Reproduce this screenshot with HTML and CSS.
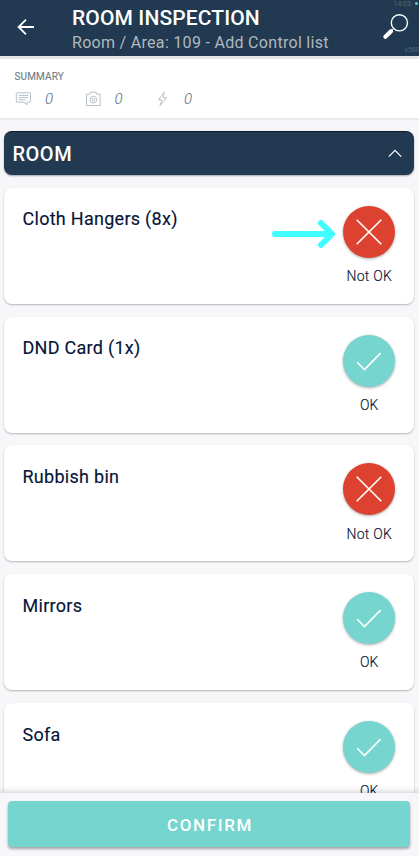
FILE: index.html
```html
<!DOCTYPE html>
<html lang="en">
<head>
<meta charset="utf-8">
<title>Room inspection</title>
<link rel="stylesheet" href="styles.css">
</head>
<body>
<svg class="defs" width="0" height="0">
  <symbol id="cross" viewBox="0 0 52 52"><path d="M14.2 14.2l23.6 23.6M37.8 14.2L14.2 37.8" fill="none" stroke="#fff" stroke-width="1.6" stroke-linecap="round"/></symbol>
  <symbol id="check" viewBox="0 0 52 52"><path d="M14.2 27.3l7.2 7.2 16.2-16.4" fill="none" stroke="#fff" stroke-width="1.6"/></symbol>
</svg>
<div class="app">
  <header class="top">
    <svg class="back" width="18" height="18" viewBox="0 0 18 18"><path d="M17 9H1.8M9 1.6L1.6 9 9 16.4" fill="none" stroke="#fff" stroke-width="1.8"/></svg>
    <div class="titles">
      <h1>ROOM INSPECTION</h1>
      <p>Room / Area: 109 - Add Control list</p>
    </div>
    <svg class="search" width="28" height="28" viewBox="0 0 28 28"><circle cx="17.4" cy="9.8" r="8.1" fill="none" stroke="#fff" stroke-width="1.4"/><path d="M11.6 15.6l-1.5 1.5" stroke="#fff" stroke-width="1"/><path d="M9 18.2l-5.6 5.6" stroke="#fff" stroke-width="4.2" stroke-linecap="round"/></svg>
    <span class="clock">14:03</span><i class="dot"></i><span class="version">v580</span>
  </header>
  <section class="summary">
    <h2>SUMMARY</h2>
    <div class="stats">
      <div class="stat"><svg width="16" height="16" viewBox="0 0 16 16"><path d="M2 1.8h12.8q.7 0 .7.7v8q0 .7-.7.7h-2.8v2.6l-3.2-2.6H2q-.7 0-.7-.7v-8q0-.7.7-.7zM3.5 4.4h9.8M3.5 6.6h9.8M3.5 8.8h7"/></svg><span>0</span></div>
      <div class="stat"><svg width="16" height="16" viewBox="0 0 16 16"><path d="M1.5 3.2h3.2l1-2h5.2l1 2h3.2v11.4H1.5z"/><circle cx="8.4" cy="8.6" r="3.4"/><circle cx="8.4" cy="8.6" r="1.4"/></svg><span>0</span></div>
      <div class="stat"><svg width="16" height="16" viewBox="0 0 16 16"><path d="M10.2 1.2L4.5 8.8h3.3L6 14.6l6.5-7.9H9.1z"/></svg><span>0</span></div>
    </div>
  </section>
  <main class="list">
    <div class="group"><span>ROOM</span><svg width="14" height="9" viewBox="0 0 14 9"><path d="M.8 7.6L7 1.4l6.2 6.2" fill="none" stroke="#fff" stroke-width="1.2"/></svg></div>
    <article class="card"><h3>Cloth Hangers (8x)</h3>
      <svg class="pointer" width="66" height="34" viewBox="0 0 66 34"><path d="M5 17h54M51 6l11 11-11 11" fill="none" stroke="#40fdff" stroke-width="6" stroke-linecap="round" stroke-linejoin="round"/></svg>
      <div class="state bad"><svg><use href="#cross"/></svg><span>Not OK</span></div></article>
    <article class="card"><h3>DND Card (1x)</h3><div class="state"><svg><use href="#check"/></svg><span>OK</span></div></article>
    <article class="card"><h3>Rubbish bin</h3><div class="state bad"><svg><use href="#cross"/></svg><span>Not OK</span></div></article>
    <article class="card"><h3>Mirrors</h3><div class="state"><svg><use href="#check"/></svg><span>OK</span></div></article>
    <article class="card"><h3>Sofa</h3><div class="state"><svg><use href="#check"/></svg><span>OK</span></div></article>
  </main>
  <footer class="bottom"><button>CONFIRM</button></footer>
</div>
</body>
</html>
```
FILE: styles.css
```css
* { box-sizing: border-box; margin: 0; padding: 0; }
body { font-family: Roboto, "Liberation Sans", sans-serif; background: #f7f7fa; color: #061538; overflow: hidden; }
.defs { position: absolute; }
.app { display: flex; flex-direction: column; width: 419px; height: 856px; }

.top { position: relative; display: flex; flex: none; height: 56px; background: #213a51; color: #fff; }
.back { margin: 18px 0 0 17px; }
.titles { margin: 5px 0 0 37px; white-space: nowrap; }
.titles h1 { font-size: 21px; line-height: 26px; font-weight: 500; letter-spacing: .12px; }
.titles p { font-size: 16px; line-height: 24px; color: #b0b8bf; letter-spacing: .3px; }
.search { position: absolute; left: 382px; top: 13px; }
.clock, .version { position: absolute; font-size: 7px; line-height: 8px; color: #536678; }
.clock { left: 393.5px; top: 0; }
.version { left: 404.5px; top: 46px; }
.dot { position: absolute; left: 415px; top: 2px; width: 3px; height: 3px; border-radius: 50%; background: #63cbc5; }

.summary { flex: none; height: 64px; padding: 12px 15px 0; background: #fff; border-top: 3px solid #e6e6e6; border-bottom: 2px solid #eaeaea; }
.summary h2 { margin-left: -.5px; font-size: 10px; line-height: 12px; font-weight: 400; color: #6b7a87; letter-spacing: .15px; -webkit-text-stroke: .1px #6b7a87; }
.stats { display: flex; margin-top: 7px; }
.stat { display: flex; align-items: center; width: 69.5px; height: 18px; }
.stat svg { fill: none; stroke: #b6c0c7; stroke-width: 1; }
.stat span { margin-left: 14px; font-size: 15px; font-style: italic; font-weight: 300; color: #5c6a77; }

.list { flex: 1; min-height: 0; overflow: hidden; padding: 11px 5.5px 0 4.3px; }
.group { display: flex; align-items: center; justify-content: space-between; height: 44px; padding: 1px 12px 0 8.2px; border-top: 1px solid #0b1d30; border-radius: 8px; background: #213a51; color: #fff; font-size: 20px; font-weight: 500; letter-spacing: .5px; box-shadow: 0 1px 2px #0005; }
.group span { margin-top: -1px; }
.group svg { margin-top: -1px; }
.card { position: relative; display: flex; justify-content: space-between; height: 116px; margin-top: 12.8px; padding: 18px 18.2px 0 18.2px; border-radius: 8px; background: #fff; box-shadow: 0 1px 2px #0004; }
.card h3 { margin-top: 1.7px; font-size: 18px; line-height: 24px; font-weight: 400; letter-spacing: .28px; -webkit-text-stroke: .15px #061538; }
.state { display: flex; flex-direction: column; align-items: center; width: 52px; white-space: nowrap; }
.state svg { width: 52px; height: 52px; border-radius: 50%; background: #76d5cf; box-shadow: 0 1px 3px #0005; }
.state.bad svg { background: #dd4230; }
.state span { margin-top: 10.3px; font-size: 14px; line-height: 17px; font-weight: 300; letter-spacing: .25px; -webkit-text-stroke: .15px #061538; }
.pointer { position: absolute; left: 265.7px; top: 29px; }

.bottom { position: relative; flex: none; height: 63px; padding: 8.4px 9px 0 8px; background: #f7f7fa; box-shadow: 0 -2px 5px #21364b33; }
.bottom button { display: block; width: 100%; height: 46px; padding: 1px 0 0 2px; border: 0; border-radius: 4px; background: #76d5cf; color: #fff; font: 500 17px Roboto, sans-serif; letter-spacing: 1.6px; box-shadow: 0 2px 3px #0005; }
```
